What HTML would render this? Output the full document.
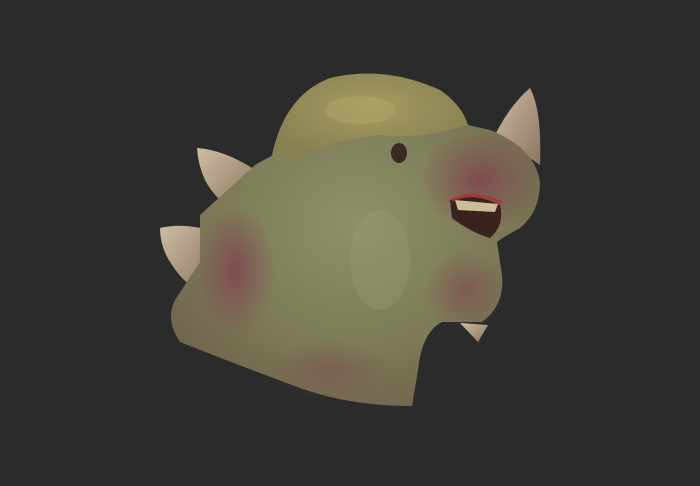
<!DOCTYPE html>
<html><head><style>
html,body{margin:0;padding:0;background:#2b2b2b;width:700px;height:486px;overflow:hidden}
svg{display:block}
</style></head><body>
<svg width="700" height="486" viewBox="0 0 700 486" xmlns="http://www.w3.org/2000/svg">
<defs>
<radialGradient id="skin" cx="0.5" cy="0.45" r="0.7">
<stop offset="0" stop-color="#8e9068"/>
<stop offset="0.55" stop-color="#7c7a58"/>
<stop offset="1" stop-color="#6a5a48"/>
</radialGradient>
<radialGradient id="skull" cx="0.5" cy="0.4" r="0.6">
<stop offset="0" stop-color="#a69c62"/>
<stop offset="1" stop-color="#868052"/>
</radialGradient>
<linearGradient id="horn" x1="0" y1="0" x2="1" y2="1">
<stop offset="0" stop-color="#cbbda2"/>
<stop offset="1" stop-color="#8e7462"/>
</linearGradient>
<radialGradient id="red" cx="0.5" cy="0.5" r="0.5">
<stop offset="0" stop-color="#7e4650" stop-opacity="0.9"/>
<stop offset="1" stop-color="#7e4650" stop-opacity="0"/>
</radialGradient>
</defs>
<path d="M197 148 Q225 150 255 170 L240 215 Q215 200 205 180 Q198 165 197 148Z" fill="url(#horn)"/>
<path d="M160 228 Q185 222 215 232 L205 295 Q185 285 172 265 Q160 248 160 228Z" fill="url(#horn)"/>
<path d="M530 88 Q542 110 540 165 L495 135 Q510 105 530 88Z" fill="url(#horn)"/>
<path d="M200 215 L255 165 L300 140 L300 100 Q340 70 385 75 Q445 85 468 125 L490 130 Q535 148 540 182 Q540 212 520 228 Q505 236 497 242 L502 275 Q505 305 482 322 L442 322 Q422 332 418 370 L412 406 Q350 406 300 388 Q230 362 180 342 Q165 320 175 300 L200 262 Z" fill="url(#skin)"/>
<path d="M272 155 Q285 95 330 78 Q385 65 440 90 Q462 105 468 125 Q420 140 380 135 Q330 140 300 160 Z" fill="url(#skull)"/>
<ellipse cx="235" cy="270" rx="40" ry="65" fill="url(#red)"/>
<ellipse cx="480" cy="180" rx="60" ry="50" fill="url(#red)"/>
<ellipse cx="465" cy="290" rx="40" ry="40" fill="url(#red)" opacity="0.7"/>
<ellipse cx="330" cy="370" rx="60" ry="30" fill="url(#red)" opacity="0.5"/>
<ellipse cx="399" cy="153" rx="8" ry="10" fill="#3a2a26"/>
<path d="M450 200 Q475 192 500 205 Q505 225 490 238 Q470 232 452 218 Z" fill="#3a221e"/>
<path d="M455 200 L498 204 L495 212 L458 210Z" fill="#cdbd98"/>
<path d="M452 200 Q475 190 502 203" stroke="#a83838" stroke-width="3" fill="none"/>
<path d="M460 323 L488 325 L478 342 Z" fill="url(#horn)"/>
<ellipse cx="360" cy="110" rx="35" ry="14" fill="#b8ae74" opacity="0.35"/>
<ellipse cx="380" cy="260" rx="30" ry="50" fill="#a8aa88" opacity="0.2"/>
</svg>
</body></html>
